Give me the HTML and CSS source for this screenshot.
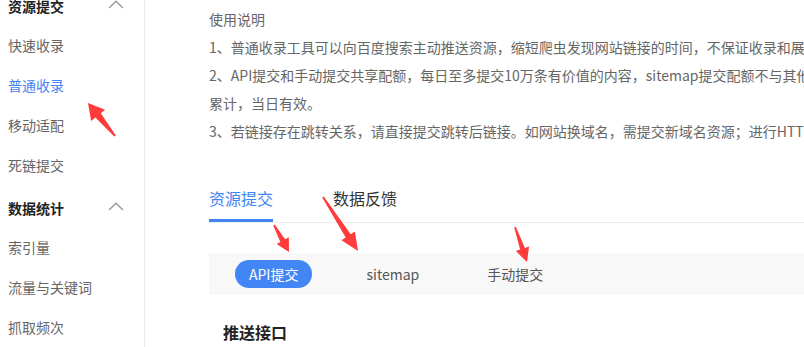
FILE: index.html
```html
<!doctype html>
<html lang="zh-CN">
<head>
  <meta charset="utf-8">
  <title>普通收录</title>
  <link rel="stylesheet" href="styles.css">
</head>
<body>

  <div class="page">
    <div class="sidebar">
      <div class="group">
        <div class="group-title">资源提交
          <svg class="chevron" width="16" height="9" viewBox="0 0 16 9"><polyline points="1,8 8,1.2 15,8" fill="none" stroke="#9a9a9a" stroke-width="1.4"/></svg>
        </div>
        <div class="nav-item">快速收录</div>
        <div class="nav-item active">普通收录</div>
        <div class="nav-item">移动适配</div>
        <div class="nav-item">死链提交</div>
      </div>
      <div class="group">
        <div class="group-title">数据统计
          <svg class="chevron" width="16" height="9" viewBox="0 0 16 9"><polyline points="1,8 8,1.2 15,8" fill="none" stroke="#9a9a9a" stroke-width="1.4"/></svg>
        </div>
        <div class="nav-item">索引量</div>
        <div class="nav-item">流量与关键词</div>
        <div class="nav-item">抓取频次</div>
      </div>
    </div>

    <div class="main">
      <div class="notes">
        <p>使用说明</p>
        <p>1、普通收录工具可以向百度搜索主动推送资源，缩短爬虫发现网站链接的时间，不保证收录和展现效果。</p>
        <p>2、API提交和手动提交共享配额，每日至多提交10万条有价值的内容，sitemap提交配额不与其他方式合并累计，当日有效。</p>
        <p>3、若链接存在跳转关系，请直接提交跳转后链接。如网站换域名，需提交新域名资源；进行HTTPS改造</p>
      </div>

      <div class="tabs">
        <div class="tab active">资源提交</div>
        <div class="tab">数据反馈</div>
      </div>

      <div class="subtabs">
        <div class="subtab active">API提交</div>
        <div class="subtab">sitemap</div>
        <div class="subtab">手动提交</div>
      </div>

      <h2 class="section-title">推送接口</h2>
    </div>
  </div>

  <!-- red annotation arrows drawn over the screenshot -->
  <svg class="marks" width="804" height="347" viewBox="0 0 804 347">
    <polygon points="88,103 105.1,109.7 100.8,113.2 115.8,135.4 114.2,136.6 95.4,117.6 91.1,121.1"/>
    <polygon points="289,252 288.8,237.2 285.1,239.2 274.7,224.6 273.3,225.4 280.3,242 276.6,244"/>
    <polygon points="358,251 354.9,231.5 350.7,234.3 323.8,196.5 322.2,197.5 345.7,237.5 341.5,240.3"/>
    <polygon points="527,262 529.1,246.5 524.9,248 515.8,226.7 514.2,227.3 520.1,249.6 515.9,251.1"/>
  </svg>

</body>
</html>
```

FILE: styles.css
```css
body {
    margin:0;
    background:#fff;
    color:#666;
    font-family:"Noto Sans CJK SC", sans-serif;
    font-size:14px;
    overflow:hidden;
}
.page {
    display:flex;
    height:347px;
    overflow:hidden;
}
/* sidebar starts scrolled up a little, like the screenshot */
.sidebar {
    width:144px;
    flex:none;
    border-right:1px solid #ebebeb;
    margin-top:-13px;
}
.group + .group {
    margin-top:4px;
}
.group-title {
    display:flex;
    align-items:center;
    justify-content:space-between;
    height:38px;
    padding:0 20px 0 8px;
    color:#222;
    font-weight:bold;
}
.chevron {
    margin-top:-3px;
}
.nav-item {
    height:40px;
    line-height:40px;
    padding-left:8px;
    color:#666;
}
.nav-item.active {
    color:#4285f4;
}
.main {
    flex:1;
    min-width:0;
    overflow:hidden;
    padding:5px 0 0 64px;
}
.notes {
    width:661px;
}
.notes p {
    margin:0;
    line-height:28px;
}
.tabs {
    display:flex;
    gap:60px;
    margin-top:41px;
    border-bottom:1px solid #eee;
}
.tab {
    font-size:16px;
    line-height:24px;
    padding-bottom:9px;
    color:#333;
    border-bottom:3px solid transparent;
}
.tab.active {
    color:#4285f4;
    border-bottom-color:#4285f4;
}
.subtabs {
    display:flex;
    align-items:center;
    gap:40px;
    margin-top:30px;
    padding:7px 26px;
    background:#f8f8f8;
}
.subtab {
    height:28px;
    line-height:28px;
    padding:0 14px;
    border-radius:14px;
    color:#555;
}
.subtab.active {
    background:#4285f4;
    color:#fff;
}
.section-title {
    margin:25px 0 0 14px;
    font-size:16px;
    line-height:24px;
    color:#222;
}
.marks {
    position:absolute;
    top:0;
    left:0;
    pointer-events:none;
    fill:#ff3b3b;
}
```
